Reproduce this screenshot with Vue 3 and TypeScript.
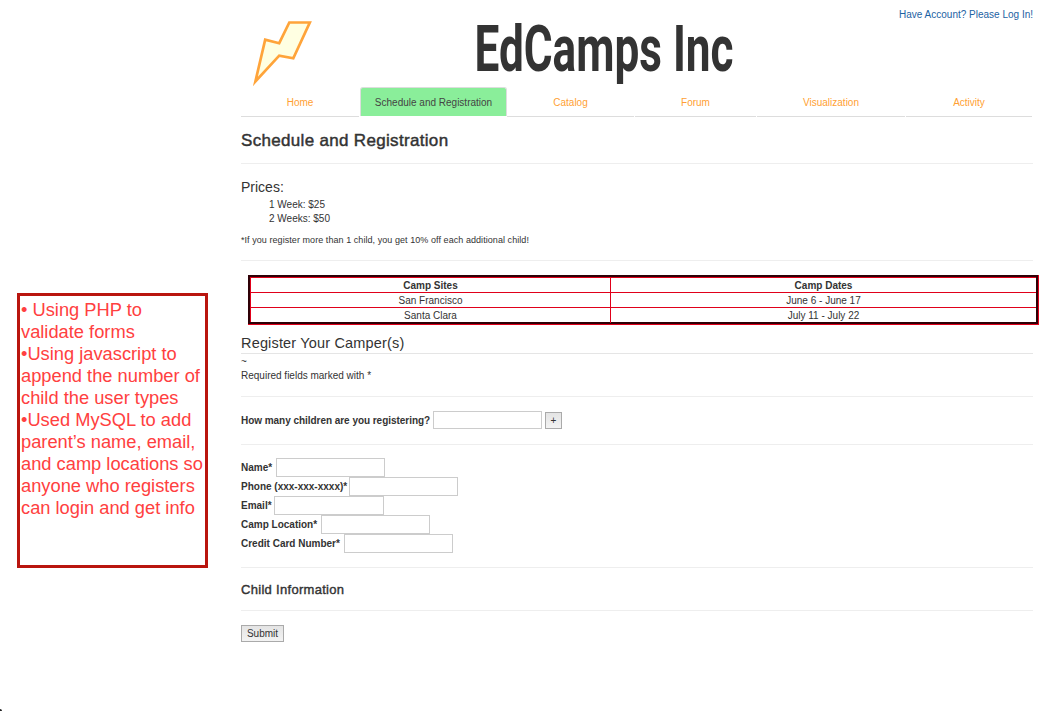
<script setup lang="ts">
interface Tab { label: string; active?: boolean }
interface Field { label: string; id: string }

const tabs: Tab[] = [
  { label: 'Home' },
  { label: 'Schedule and Registration', active: true },
  { label: 'Catalog' },
  { label: 'Forum' },
  { label: 'Visualization' },
  { label: 'Activity' },
]
const sessions: string[][] = [
  ['San Francisco', 'June 6 - June 17'],
  ['Santa Clara', 'July 11 - July 22'],
]
const fields: Field[] = [
  { label: 'Name*', id: 'name' },
  { label: 'Phone (xxx-xxx-xxxx)*', id: 'phone' },
  { label: 'Email*', id: 'email' },
  { label: 'Camp Location*', id: 'location' },
  { label: 'Credit Card Number*', id: 'card' },
]
const notes: string[] = [
  '• Using PHP to', 'validate forms', '•Using javascript to', 'append the number of',
  'child the user types', '•Used MySQL to add', 'parent’s name, email,',
  'and camp locations so', 'anyone who registers', 'can login and get info',
]
</script>

<template>
  <div class="page">
    <aside class="note">
      <div v-for="(line, i) in notes" :key="i"><span>{{ line }}</span></div>
    </aside>
    <main class="content">
      <header class="top">
        <svg class="bolt" width="64" height="70" viewBox="0 0 64 70">
          <path d="M38.3 4.5H58.8L42.3 40.3L28.2 37.6L4.4 63.5L14.2 21.7L28.2 25.2Z" fill="#ffffe2" stroke="#ffa43a" stroke-width="2.7" />
        </svg>
        <svg class="brand" width="270" height="83" viewBox="0 0 270 83">
          <text x="1.5" y="66.5" textLength="259" lengthAdjust="spacingAndGlyphs">EdCamps Inc</text>
        </svg>
        <a class="login"><span>Have Account? Please Log In!</span></a>
      </header>
      <nav class="tabs">
        <a v-for="tab in tabs" :key="tab.label" class="tab" :class="{ active: tab.active }"><span>{{ tab.label }}</span></a>
      </nav>
      <h1><span>Schedule and Registration</span></h1>
      <section class="prices">
        <h2><span>Prices:</span></h2>
        <ul><li>1 Week: $25</li><li>2 Weeks: $50</li></ul>
        <p><span>*If you register more than 1 child, you get 10% off each additional child!</span></p>
      </section>
      <div class="frame">
        <div class="bevel">
          <div class="sheet">
            <div class="row head"><div>Camp Sites</div><div>Camp Dates</div></div>
            <div v-for="s in sessions" :key="s[0]" class="row"><div v-for="c in s" :key="c">{{ c }}</div></div>
          </div>
        </div>
      </div>
      <h2 class="register"><span>Register Your Camper(s)</span></h2>
      <div class="required"><div>~</div><div>Required fields marked with *</div></div>
      <div class="count">
        <label for="count">How many children are you registering?</label>
        <input id="count" type="text"><button class="plus" type="button">+</button>
      </div>
      <form class="fields" @submit.prevent>
        <div v-for="f in fields" :key="f.id" class="field" :class="f.id">
          <label :for="f.id">{{ f.label }}</label><input :id="f.id" type="text">
        </div>
      </form>
      <h3><span>Child Information</span></h3>
      <button class="submit" type="button">Submit</button>
    </main>
    <i class="corner"></i>
  </div>
</template>

<style>
body { margin: 0; background: #fff; overflow: hidden; }
</style>

<style scoped>
* { box-sizing: border-box; }
.page { position: relative; width: 1047px; height: 711px; overflow: hidden; display: flex; background: #fff; color: #333; font: 10px/14px "Liberation Sans", Arial, sans-serif; white-space: nowrap; }
.note { flex: none; width: 191px; height: 275px; margin: 293px 33px 0 17px; border: 3px solid #b9150f; padding: 3px 0 0 1px; font-size: 18.3px; line-height: 22px; color: #ff4040; }
.content { width: 792px; flex: none; }
.top { display: flex; height: 87px; }
.bolt { margin: 18px 0 0 10px; flex: none; }
.brand { margin: 4px 0 0 158px; flex: none; font-family: Roboto, sans-serif; font-size: 65.5px; font-weight: 700; fill: #333; }
.login { margin: 8px 0 0 auto; color: #1c62a3; }
.tabs { display: grid; grid-template-columns: 119px 147px 128px 122px 149px 127px; height: 30px; color: #ff9f33; }
.tab { height: 30px; border-bottom: 1px solid #ddd; margin-right: 1px; text-align: center; line-height: 31px; }
.tab.active { margin: 0; border: 1px solid #ddd; border-bottom: 0; height: 29px; border-radius: 3px 3px 0 0; background: #8aee9a; color: #444; line-height: 29px; }
h1, h2, h3, p, ul { margin: 0; padding: 0; }
h1 { height: 47px; padding-top: 14px; font-size: 17px; line-height: 20px; font-weight: 400; letter-spacing: .32px; -webkit-text-stroke: .45px #333; border-bottom: 1px solid #eee; }
h2 { font-size: 14px; line-height: 18px; font-weight: 400; }
.prices { height: 97px; padding-top: 14px; border-bottom: 1px solid #eee; }
.prices ul { list-style: none; padding: 2px 0 0 28px; }
.prices p { font-size: 9px; line-height: 12px; margin-top: 8px; letter-spacing: .06px; }
.frame { width: 791px; height: 50px; margin: 14px 0 0 7px; border: solid #e0001a; border-width: 0 1px 1px 0; }
.bevel { height: 49px; border: 2px solid #2e0006; }
.sheet { height: 45px; border: solid #e0001a; border-width: 1px 0 0 1px; }
.row { display: grid; grid-template-columns: 360px 1fr; height: 15px; border-bottom: 1px solid #e0001a; text-align: center; line-height: 15px; }
.row:last-child { height: 14px; border: 0; }
.row > :first-child { border-right: 1px solid #e0001a; }
.head { font-weight: 700; }
.register { height: 29px; padding-top: 9px; border-bottom: 1px solid #e5e5e5; font-size: 14.5px; letter-spacing: .17px; }
.required { height: 43px; padding-top: 1px; border-bottom: 1px solid #eee; }
.count { display: flex; height: 48px; border-bottom: 1px solid #eee; padding-top: 14px; }
label { font-weight: 700; line-height: 19px; }
input { width: 109px; height: 19px; border: 1px solid #ccc; background: #fff; padding: 0; margin: 0; outline: 0; border-radius: 0; }
.count input { height: 18px; margin-left: 3px; }
button { font: inherit; color: #333; border: 1px solid #aaa; border-radius: 0; background: linear-gradient(#e4e4e4, #f3f3f3); padding: 0; }
.plus { width: 17px; height: 17px; margin: 1px 0 0 3px; line-height: 15px; }
.fields { height: 123px; padding-top: 13px; border-bottom: 1px solid #eee; }
.field { display: flex; height: 19px; }
.field label { flex: none; }
.name label { width: 35px; } .phone label { width: 108px; } .email label { width: 33px; } .location label { width: 80px; } .card label { width: 103px; }
.email input { width: 110px; }
.count label { width: 189px; letter-spacing: -.04px; }
h3 { height: 43px; padding-top: 14px; border-bottom: 1px solid #eee; font-size: 13px; line-height: 16px; font-weight: 400; letter-spacing: .3px; -webkit-text-stroke: .4px #333; }
.submit { display: block; width: 43px; height: 17px; margin-top: 14px; line-height: 15px; }
.corner { position: absolute; left: 0; bottom: 0; width: 2px; height: 2px; background: #222; border-radius: 0 2px 0 0; }
</style>
